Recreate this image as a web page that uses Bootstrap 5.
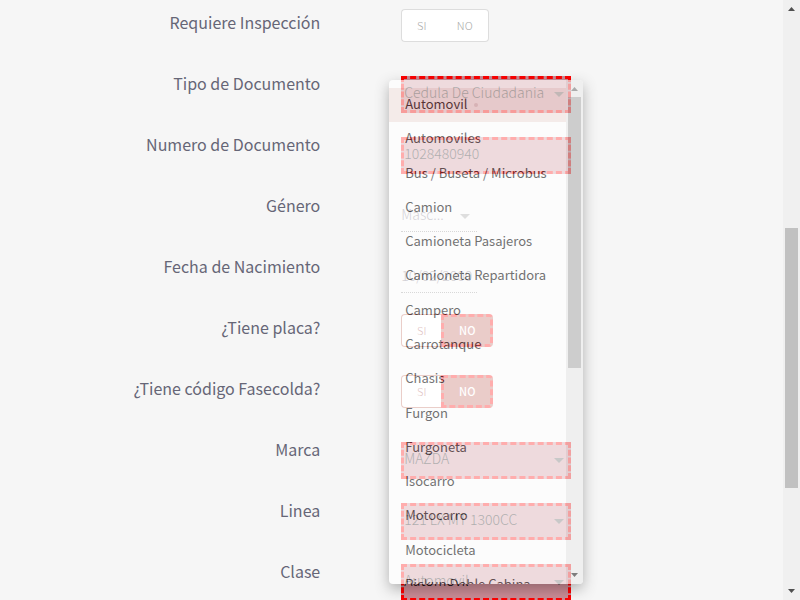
<!DOCTYPE html>
<html lang="es">
<head>
<meta charset="utf-8">
<meta name="viewport" content="width=device-width, initial-scale=1">
<title>Datos del vehículo</title>
<link href="https://cdn.jsdelivr.net/npm/bootstrap@5.3.0/dist/css/bootstrap.min.css" rel="stylesheet">
<style>
body{font-family:"Noto Sans CJK SC","Noto Sans",sans-serif;background:#f6f6f6;color:#666677;height:100vh}
.form-area{padding-top:5px;margin-right:17px}
.form-line{height:61px}
.caption{padding-right:6px;font-size:16px;line-height:24px;padding-top:5px;text-align:right}
.control{padding-left:75px;padding-top:10px}
.control-toggle{padding-top:4px}
.field{display:block;width:170px;height:37px;border:3px dashed #f00;background:#cb8c96;border-radius:0;padding:0 0 5px;font-size:14px;font-weight:300;line-height:20px;color:#000;appearance:none;outline:0}
.picker{position:relative;width:170px}
.picker::after{content:"";position:absolute;right:7px;top:16px;border:5px solid transparent;border-top-color:#555;border-bottom:0;pointer-events:none}
.picker-short{width:76px}
.picker-short::after{border-top-color:#999}
.plain{width:76px;border:0;border-bottom:1px dotted #888;background:transparent;color:#777080;padding:0 0 2px;height:34px}
.toggle{height:33px}
.toggle .btn{width:40px;padding:0;font-size:11px;font-weight:300;line-height:30px;border:1px solid #ddd;border-right:0;background:#fff;color:#aaa;border-radius:4px 0 0 4px}
.toggle .btn:last-child{width:48px;border:1px solid #ddd;border-left:0;border-radius:0 4px 4px 0;margin:0}
.marked .btn,.toggle.marked .btn:first-of-type{border-color:#c06858;color:#a04040}
.toggle.marked .btn:last-child{width:52px;border:3px dashed #f00;background:#c06058;color:#fff;font-weight:500;line-height:26px}
.options{left:63px;top:-474px;width:194px;height:504px;border-radius:4px;background:#fff;opacity:.68;overflow:hidden;box-shadow:0 5px 14px rgba(0,0,0,.42)}
.entries{height:522px;padding-top:8px;margin:0;width:177px}
.entries button{border:0;background:transparent;color:#333;font-size:13px;line-height:20px;padding:0 16px 2px;width:100%;text-align:left;white-space:nowrap}
.entries .current{background:#f4e6e4;color:#200808}
.dot{display:inline-block;width:4px;height:4px;margin-left:7px;border-radius:50%;background:#dcc4c4;vertical-align:2px}
.bar{width:17px;background:#ececec}
.bar .thumb{position:absolute;left:2px;right:2px;background:#bbb}
.bar svg{position:absolute;left:5px}
.page-bar{background:#f0f0f0;z-index:20}
.page-bar .thumb{top:38%;height:260px;background:#c1c1c1}
</style>
</head>
<body class="overflow-hidden">
<form class="form-area">
<div class="row g-0 form-line"><span class="col-5 caption">Requiere Inspección</span><div class="col-7 control control-toggle"><div class="toggle d-flex" role="group" aria-label="Requiere Inspección"><input class="btn-check" type="radio" name="insp" id="i1"><label class="btn" for="i1">SI</label><input class="btn-check" type="radio" name="insp" id="i2"><label class="btn" for="i2">NO</label></div></div></div>
<div class="row g-0 form-line"><label class="col-5 caption" for="tipo">Tipo de Documento</label><div class="col-7 control"><div class="picker"><select class="field" id="tipo"><option>Cedula De Ciudadania</option></select></div></div></div>
<div class="row g-0 form-line"><label class="col-5 caption" for="num">Numero de Documento</label><div class="col-7 control"><input class="field" id="num" value="1028480940"></div></div>
<div class="row g-0 form-line"><label class="col-5 caption" for="gen">Género</label><div class="col-7 control"><div class="picker picker-short"><select class="field plain" id="gen"><option>Masc...</option></select></div></div></div>
<div class="row g-0 form-line"><label class="col-5 caption" for="fecha">Fecha de Nacimiento</label><div class="col-7 control"><input class="field plain" id="fecha" value="10/02/2000"></div></div>
<div class="row g-0 form-line"><span class="col-5 caption">¿Tiene placa?</span><div class="col-7 control control-toggle"><div class="toggle marked d-flex" role="group" aria-label="¿Tiene placa?"><input class="btn-check" type="radio" name="placa" id="p1"><label class="btn" for="p1">SI</label><input class="btn-check" type="radio" name="placa" id="p2"><label class="btn" for="p2">NO</label></div></div></div>
<div class="row g-0 form-line"><span class="col-5 caption">¿Tiene código Fasecolda?</span><div class="col-7 control control-toggle"><div class="toggle marked d-flex" role="group" aria-label="¿Tiene código Fasecolda?"><input class="btn-check" type="radio" name="cod" id="c1"><label class="btn" for="c1">SI</label><input class="btn-check" type="radio" name="cod" id="c2"><label class="btn" for="c2">NO</label></div></div></div>
<div class="row g-0 form-line"><label class="col-5 caption" for="marca">Marca</label><div class="col-7 control"><div class="picker"><select class="field" id="marca"><option>MAZDA</option></select></div></div></div>
<div class="row g-0 form-line"><label class="col-5 caption" for="linea">Linea</label><div class="col-7 control"><div class="picker"><select class="field" id="linea"><option>121 LX MT 1300CC</option></select></div></div></div>
<div class="row g-0 form-line"><label class="col-5 caption" for="clase">Clase</label><div class="col-7 control position-relative"><div class="picker"><select class="field" id="clase"><option>Automovil</option></select></div>
<div class="options position-absolute">
<ul class="entries list-unstyled d-flex flex-column">
<li class="flex-fill d-flex"><button type="button" class="current">Automovil<span class="dot"></span></button></li>
<li class="flex-fill d-flex"><button type="button">Automoviles</button></li>
<li class="flex-fill d-flex"><button type="button">Bus / Buseta / Microbus</button></li>
<li class="flex-fill d-flex"><button type="button">Camion</button></li>
<li class="flex-fill d-flex"><button type="button">Camioneta Pasajeros</button></li>
<li class="flex-fill d-flex"><button type="button">Camioneta Repartidora</button></li>
<li class="flex-fill d-flex"><button type="button">Campero</button></li>
<li class="flex-fill d-flex"><button type="button">Carrotanque</button></li>
<li class="flex-fill d-flex"><button type="button">Chasis</button></li>
<li class="flex-fill d-flex"><button type="button">Furgon</button></li>
<li class="flex-fill d-flex"><button type="button">Furgoneta</button></li>
<li class="flex-fill d-flex"><button type="button">Isocarro</button></li>
<li class="flex-fill d-flex"><button type="button">Motocarro</button></li>
<li class="flex-fill d-flex"><button type="button">Motocicleta</button></li>
<li class="flex-fill d-flex"><button type="button">Pickup Doble Cabina</button></li>
</ul>
<div class="bar position-absolute top-0 end-0 bottom-0"><svg width="7" height="4" style="top:7px"><path d="M0 4 3.5 0 7 4z" fill="#888"/></svg><div class="thumb" style="top:17px;height:271px"></div><svg width="7" height="4" style="bottom:7px"><path d="M0 0h7L3.5 4z" fill="#444"/></svg></div>
</div></div></div>
</form>
<div class="bar page-bar position-fixed top-0 end-0 bottom-0"><svg width="7" height="4" style="top:7px"><path d="M0 4 3.5 0 7 4z" fill="#505050"/></svg><div class="thumb"></div><svg width="7" height="4" style="bottom:7px"><path d="M0 0h7L3.5 4z" fill="#505050"/></svg></div>
</body>
</html>
